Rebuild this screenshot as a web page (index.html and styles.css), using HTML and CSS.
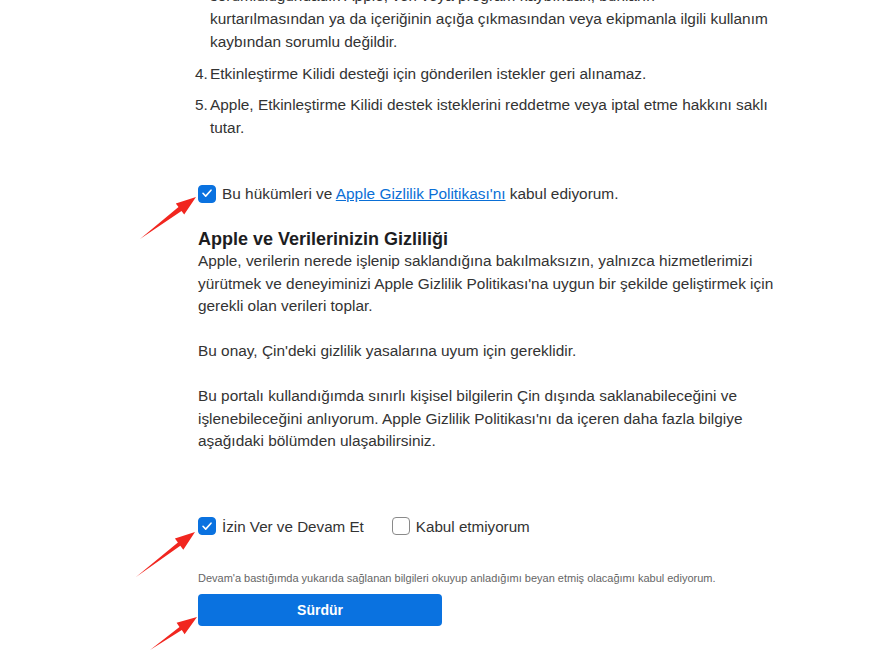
FILE: index.html
```html
<!DOCTYPE html>
<html lang="tr">
<head>
<meta charset="utf-8">
<title>Etkinleştirme Kilidi</title>
<link rel="stylesheet" href="styles.css">
</head>
<body>
<div class="page">
  <div class="terms">
    <div class="item">
      <span class="num"></span>
      <span class="txt">sorumluluğundadır. Apple, veri veya program kaybından, bunların<br>kurtarılmasından ya da içeriğinin açığa çıkmasından veya ekipmanla ilgili kullanım<br>kaybından sorumlu değildir.</span>
    </div>
    <div class="item">
      <span class="num">4.</span>
      <span class="txt">Etkinleştirme Kilidi desteği için gönderilen istekler geri alınamaz.</span>
    </div>
    <div class="item">
      <span class="num">5.</span>
      <span class="txt">Apple, Etkinleştirme Kilidi destek isteklerini reddetme veya iptal etme hakkını saklı<br>tutar.</span>
    </div>
  </div>

  <label class="check-row agree">
    <span class="box checked"><svg viewBox="0 0 18 18" width="18" height="18"><path d="M5 9.3l2.7 2.8L13 6.2" fill="none" stroke="#fff" stroke-width="1.6" stroke-linecap="round" stroke-linejoin="round"/></svg></span>
    <span class="label">Bu hükümleri ve <a class="link" href="#">Apple Gizlilik Politikası'nı</a> kabul ediyorum.</span>
  </label>

  <h2 class="title">Apple ve Verilerinizin Gizliliği</h2>
  <p class="para">Apple, verilerin nerede işlenip saklandığına bakılmaksızın, yalnızca hizmetlerimizi<br>yürütmek ve deneyiminizi Apple Gizlilik Politikası'na uygun bir şekilde geliştirmek için<br>gerekli olan verileri toplar.<br><br>Bu onay, Çin'deki gizlilik yasalarına uyum için gereklidir.<br><br>Bu portalı kullandığımda sınırlı kişisel bilgilerin Çin dışında saklanabileceğini ve<br>işlenebileceğini anlıyorum. Apple Gizlilik Politikası'nı da içeren daha fazla bilgiye<br>aşağıdaki bölümden ulaşabilirsiniz.</p>

  <div class="choices">
    <label class="check-row">
      <span class="box checked"><svg viewBox="0 0 18 18" width="18" height="18"><path d="M5 9.3l2.7 2.8L13 6.2" fill="none" stroke="#fff" stroke-width="1.6" stroke-linecap="round" stroke-linejoin="round"/></svg></span>
      <span class="label">İzin Ver ve Devam Et</span>
    </label>
    <label class="check-row">
      <span class="box"></span>
      <span class="label">Kabul etmiyorum</span>
    </label>
  </div>

  <p class="note">Devam'a bastığımda yukarıda sağlanan bilgileri okuyup anladığımı beyan etmiş olacağımı kabul ediyorum.</p>

  <button class="submit" type="button">Sürdür</button>
</div>

<svg class="arrows" width="879" height="657" viewBox="0 0 879 657">
  <polygon points="140,239 181.5,211 184.2,214.6 196,197 175.8,203.4 178.5,207" fill="#f1261f"/>
  <polygon points="136,577 180.3,545.7 183.3,549.7 195,532 174.9,538.5 177.9,542.5" fill="#f1261f"/>
  <polygon points="150,650 181.8,630.1 184.6,634.2 197,617 176.6,622.8 179.5,626.9" fill="#f1261f"/>
</svg>
</body>
</html>
```

FILE: styles.css
```css
html, body {
  margin: 0;
  padding: 0;
  background: #fff;
}
body {
  width: 879px;
  height: 657px;
  overflow: hidden;
  position: relative;
  font-family: "Liberation Sans", Arial, sans-serif;
  color: #333;
}
.page {
  padding-left: 196px;
  width: 620px;
}
.terms {
  margin-top: -16px;
  margin-left: -1px;
  display: flex;
  flex-direction: column;
  gap: 8.5px;
  font-size: 15.4px;
  line-height: 23px;
}
.item {
  display: flex;
}
.num {
  width: 15px;
  flex: none;
}
.txt {
  white-space: nowrap;
}
.check-row {
  display: flex;
  align-items: center;
  gap: 6px;
  font-size: 15.4px;
  line-height: 23px;
  cursor: pointer;
}
.agree {
  margin-top: 43px;
  margin-left: 2px;
}
.box {
  width: 18px;
  height: 18px;
  box-sizing: border-box;
  border-radius: 4px;
  border: 1.5px solid #8a8a8a;
  background: #fff;
  flex: none;
  display: flex;
}
.box.checked {
  background: #0a72e0;
  border-color: #0a72e0;
}
.box svg {
  margin: -1.5px;
}
.link {
  color: #0a6fd6;
  text-decoration: underline;
}
.title {
  margin: 23px 0 0 2px;
  font-size: 18px;
  line-height: 22px;
  font-weight: bold;
  color: #1d1d1f;
}
.para {
  margin: 0 0 0 2px;
  font-size: 15.4px;
  line-height: 22.5px;
  white-space: nowrap;
}
.choices {
  display: flex;
  gap: 28px;
  margin: 62px 0 0 2px;
}
.choices .check-row {
  font-size: 15.2px;
}
.note {
  margin: 33px 0 0 2px;
  font-size: 11px;
  line-height: 14px;
  color: #666;
  white-space: nowrap;
}
.submit {
  display: block;
  margin: 9px 0 0 2px;
  width: 244px;
  height: 32px;
  border: none;
  border-radius: 4px;
  background: #0a72e0;
  color: #fff;
  font-family: "Liberation Sans", Arial, sans-serif;
  font-size: 14px;
  font-weight: bold;
}
.arrows {
  position: absolute;
  left: 0;
  top: 0;
  pointer-events: none;
}
```
